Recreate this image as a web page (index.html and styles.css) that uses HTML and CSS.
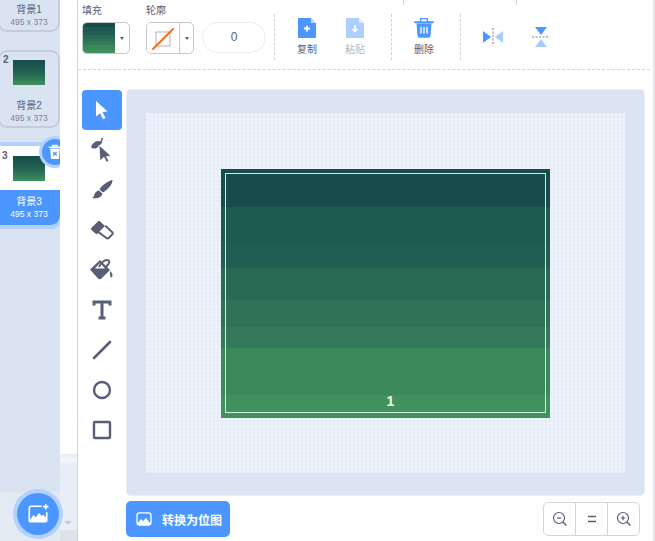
FILE: index.html
```html
<!DOCTYPE html>
<html>
<head>
    <title>背景3</title>
    <link rel="stylesheet" href="styles.css">
</head>
<body>
    <div class="app">
        <div class="sidebar">
            <div class="backdrops">
                <div class="card">
                    <div class="thumb"></div>
                    <div class="info">
                        <div class="name">背景1</div>
                        <div class="size">495 x 373</div>
                    </div>
                </div>
                <div class="card">
                    <span class="index">2</span>
                    <div class="thumb"></div>
                    <div class="info">
                        <div class="name">背景2</div>
                        <div class="size">495 x 373</div>
                    </div>
                </div>
                <div class="card selected">
                    <span class="index">3</span>
                    <div class="thumb"></div>
                    <div class="info">
                        <div class="name">背景3</div>
                        <div class="size">495 x 373</div>
                    </div>
                    <div class="remove">
                        <svg width="14" height="16" viewBox="0 0 16 18">
                            <path d="M1 3.500h14M5.500 3.200V1.500h5v1.700" fill="none" stroke="#fff" stroke-width="1.600"/>
                            <path d="M2.500 5h11l-1 12h-9z" fill="#fff"/>
                            <path d="M6 9l4 4M10 9l-4 4" stroke="#4c97ff" stroke-width="1.500"/>
                        </svg>
                    </div>
                </div>
            </div>
            <div class="strip">
                <span class="strip-arrow"></span>
            </div>
            <div class="add-backdrop">
                <svg width="22" height="22" viewBox="0 0 24 24">
                    <path d="M16 3.500H4.500a2 2 0 0 0-2 2v13a2 2 0 0 0 2 2h15a2 2 0 0 0 2-2V10" fill="none" stroke="#fff" stroke-width="1.800"/>
                    <path d="M3 19l4-6 2.500 2.500 3.500-4.500 3 3 2-1 3 3v3.500H3z" fill="#fff"/>
                    <path d="M20.500 1v6M17.500 4h6" stroke="#fff" stroke-width="1.800"/>
                </svg>
            </div>
        </div>

        <div class="main">
            <div class="toolbar">
                <span class="tick first"></span>
                <span class="tick second"></span>
                <div class="picker">
                    <div class="picker-label">填充</div>
                    <div class="picker-box">
                        <div class="swatch"></div>
                        <div class="caret"><span></span></div>
                    </div>
                </div>
                <div class="picker">
                    <div class="picker-label">轮廓</div>
                    <div class="picker-box">
                        <div class="swatch none">
                            <svg width="32" height="32" viewBox="0 0 32 32">
                                <rect x="9" y="9" width="14" height="14" fill="none" stroke="#b5b5b5"/>
                                <path d="M6 26L26 6" stroke="#ff6a1f" stroke-width="2" stroke-linecap="round"/>
                            </svg>
                        </div>
                        <div class="caret"><span></span></div>
                    </div>
                </div>
                <div class="stroke-width">0</div>

                <div class="group">
                    <div class="action">
                        <svg width="20" height="20" viewBox="0 0 20 20">
                            <path d="M1 0h13l5 5v15H1z" fill="#4c97ff"/>
                            <path d="M14 0v5h5z" fill="#c4dcff"/>
                            <path d="M10 7.500v6M7 10.500h6" stroke="#fff" stroke-width="1.800"/>
                        </svg>
                        <span>复制</span>
                    </div>
                    <div class="action off">
                        <svg width="20" height="20" viewBox="0 0 20 20">
                            <path d="M1 0h13l5 5v15H1z" fill="#4c97ff"/>
                            <path d="M14 0v5h5z" fill="#c4dcff"/>
                            <path d="M10 7v6M7.500 11l2.500 2.500 2.500-2.500" fill="none" stroke="#fff" stroke-width="1.600"/>
                        </svg>
                        <span>粘贴</span>
                    </div>
                </div>
                <div class="group">
                    <div class="action">
                        <svg width="20" height="20" viewBox="0 0 20 20">
                            <path d="M1 4.200h18" stroke="#4c97ff" stroke-width="2" stroke-linecap="round"/>
                            <path d="M6.500 4V1.500a1 1 0 0 1 1-1h5a1 1 0 0 1 1 1V4" fill="none" stroke="#4c97ff" stroke-width="1.500"/>
                            <path d="M2.500 5.500h15l-1 12.500a2 2 0 0 1-2 1.800h-9a2 2 0 0 1-2-1.800z" fill="#4c97ff"/>
                            <path d="M7 9v6.500M10 9v6.500M13 9v6.500" stroke="#fff" stroke-width="1.400"/>
                        </svg>
                        <span>删除</span>
                    </div>
                </div>
                <div class="flips">
                    <svg width="20" height="20" viewBox="0 0 20 20">
                        <path d="M0 4l8 6-8 6z" fill="#4c97ff"/>
                        <path d="M20 4l-8 6 8 6z" fill="#a9ccff"/>
                        <path d="M10 1v18" stroke="#a8a8ae" stroke-width="1.500" stroke-dasharray="2 1.500"/>
                    </svg>
                    <svg width="20" height="20" viewBox="0 0 20 20">
                        <path d="M4 0l6 8 6-8z" fill="#4c97ff"/>
                        <path d="M4 20l6-8 6 8z" fill="#a9ccff"/>
                        <path d="M1 10h18" stroke="#a8a8ae" stroke-width="1.500" stroke-dasharray="2 1.500"/>
                    </svg>
                </div>
            </div>

            <div class="workspace">
                <div class="tools">
                    <div class="tool active">
                        <svg width="20" height="20" viewBox="0 0 20 20">
                            <path d="M4 1l11.500 10.500-5 .5 3 6-2.500 1.200-3-6L4 16.500z" fill="#fff"/>
                        </svg>
                    </div>
                    <div class="tool">
                        <svg width="24" height="26" viewBox="0 0 24 26">
                            <path d="M1 10c1-3 4-6 7-6s4 1 4 2l-4 4-2 1.500c-2 .3-4 0-5-1.500z" fill="#575e75"/>
                            <path d="M10.500 6l2-5" stroke="#575e75" stroke-width="1.400"/>
                            <path d="M9 8l12 11-4.500.5 2.500 4.500-2.500 1.200-2.500-5L10 24z" fill="#575e75" stroke="#fff" stroke-width=".8"/>
                        </svg>
                    </div>
                    <div class="tool">
                        <svg width="24" height="24" viewBox="0 0 24 24">
                            <path d="M22.500 2c-3 .5-10 4-13 9.500l3.500 3C18 11 22.500 7 22.500 2z" fill="#575e75"/>
                            <path d="M9 12.500l3.300 2.900c-.3 3.500-4.500 5.800-10.500 4.600 2.500-1 2-2.800 3.200-4.800.8-1.300 2.400-2.400 4-2.700z" fill="#575e75"/>
                        </svg>
                    </div>
                    <div class="tool">
                        <svg width="24" height="24" viewBox="0 0 24 24">
                            <path d="M9 2.500L1.500 9.800a1.500 1.500 0 0 0 0 2.200l5 4.500 8.500-8.500z" fill="#575e75"/>
                            <path d="M15.300 7.800l7 6.400a1.500 1.500 0 0 1 0 2.200l-3.400 3.400a2 2 0 0 1-2.800 0l-8.700-6.400" fill="none" stroke="#575e75" stroke-width="2"/>
                        </svg>
                    </div>
                    <div class="tool">
                        <svg width="26" height="24" viewBox="0 0 26 24">
                            <path d="M11 2L1 11.500l8 9c1 1 2.500 1 3.500 0L21 12z" fill="#575e75"/>
                            <path d="M11 5l5 5.500H6z" fill="#fff"/>
                            <path d="M10 9c2-4 5-7 8-7 2.500 0 3 2 1.500 4L17 9" fill="none" stroke="#575e75" stroke-width="2"/>
                            <path d="M21 13c1.500 1 2.500 3 2.500 4.500S22 20 21.500 19 21 15 21 13z" fill="#575e75"/>
                        </svg>
                    </div>
                    <div class="tool">
                        <svg width="20" height="20" viewBox="0 0 20 20">
                            <path d="M2 5.500V2h16v3.500M10 2v16M6.500 18h7" fill="none" stroke="#575e75" stroke-width="3"/>
                        </svg>
                    </div>
                    <div class="tool">
                        <svg width="22" height="22" viewBox="0 0 22 22">
                            <path d="M3 19L19 3" stroke="#575e75" stroke-width="2.600" stroke-linecap="round"/>
                        </svg>
                    </div>
                    <div class="tool">
                        <svg width="20" height="20" viewBox="0 0 20 20">
                            <circle cx="10" cy="10" r="8" fill="none" stroke="#575e75" stroke-width="2.400"/>
                        </svg>
                    </div>
                    <div class="tool">
                        <svg width="20" height="20" viewBox="0 0 20 20">
                            <rect x="2" y="2" width="16" height="16" rx="1" fill="none" stroke="#575e75" stroke-width="2.400"/>
                        </svg>
                    </div>
                </div>

                <div class="canvas-panel">
                    <div class="canvas-inner">
                        <div class="artwork">
                            <div class="frame">
                                <span class="frame-number">1</span>
                            </div>
                        </div>
                    </div>
                </div>
            </div>

            <div class="footer">
                <div class="convert">
                    <svg width="16" height="14" viewBox="0 0 18 16">
                        <rect x="1" y="1" width="16" height="14" rx="3" fill="none" stroke="#fff" stroke-width="1.500"/>
                        <path d="M1.500 13l4-5 2.500 2.500 3-4 5 6v1.500a1 1 0 0 1-1 1H3z" fill="#fff"/>
                    </svg>
                    <span>转换为位图</span>
                </div>
                <div class="zoom-group">
                    <div class="zoom-btn">
                        <svg width="16" height="16" viewBox="0 0 16 16">
                            <circle cx="7" cy="7" r="5.500" fill="none" stroke="#575e75" stroke-width="1.200"/>
                            <path d="M11 11l3.500 3.500" stroke="#575e75" stroke-width="1.400"/>
                            <path d="M4.800 7h4.400" stroke="#575e75" stroke-width="1.200"/>
                        </svg>
                    </div>
                    <div class="zoom-btn">
                        <svg width="16" height="16" viewBox="0 0 16 16">
                            <path d="M4 5.500h8M4 10.500h8" stroke="#575e75" stroke-width="1.400"/>
                        </svg>
                    </div>
                    <div class="zoom-btn">
                        <svg width="16" height="16" viewBox="0 0 16 16">
                            <circle cx="7" cy="7" r="5.500" fill="none" stroke="#575e75" stroke-width="1.200"/>
                            <path d="M11 11l3.500 3.500" stroke="#575e75" stroke-width="1.400"/>
                            <path d="M4.800 7h4.400M7 4.800v4.400" stroke="#575e75" stroke-width="1.200"/>
                        </svg>
                    </div>
                </div>
            </div>
        </div>
    </div>
</body>
</html>
```

FILE: styles.css
```css
html, body {
    height: 100%;
    margin: 0;
    overflow: hidden;
}

body {
    background: #fff;
    color: #575e75;
    font-family: "Liberation Sans", "Noto Sans CJK SC", sans-serif;
}

.app {
    display: flex;
    height: 541px;
    width: 655px;
}

/* left column with the backdrop list */
.sidebar {
    background: #fff;
    border-right: 1px solid #d3d3d6;
    display: flex;
    flex: none;
    height: 541px;
    overflow: hidden;
    position: relative;
    width: 77px;
}

.backdrops {
    background: linear-gradient(#d9e3f2 492px, #e2eaf4 492px);
    display: flex;
    flex: none;
    flex-direction: column;
    gap: 18px;
    height: 541px;
    overflow: hidden;
    position: relative;
    width: 60px;
}

.card {
    align-items: center;
    background: #d9e3f2;
    border: 2px solid #c6cdd9;
    border-radius: 9px;
    box-sizing: border-box;
    display: flex;
    flex: none;
    flex-direction: column;
    height: 78px;
    margin-left: -2px;
    padding-top: 8px;
    position: relative;
    width: 62px;
}

.card:first-child {
    margin-top: -46px;
}

.index {
    color: #575e75;
    font-size: 10px;
    font-weight: bold;
    left: 3px;
    line-height: 12px;
    position: absolute;
    top: 2px;
}

.thumb {
    background: linear-gradient(#164c4b, #1f5d50 40%, #2e7257 70%, #3f925d);
    flex: none;
    height: 25px;
    width: 32px;
}

.info {
    margin-top: 14px;
    text-align: center;
}

.name {
    font-size: 10px;
    line-height: 13px;
}

.size {
    color: #7d8394;
    font-size: 8.500px;
    line-height: 13px;
}

.card.selected {
    background: #fff;
    border: 0;
    border-radius: 0 0 9px 0;
    box-shadow: 0 0 0 4px #b4d1fb;
    height: 79px;
    margin-left: 0;
    padding-top: 10px;
    width: 60px;
}

.selected .index {
    left: 2px;
    top: 4px;
}

.selected .thumb {
    margin-right: 2px;
}

.selected .info {
    background: #4c97ff;
    border-radius: 0 0 9px 0;
    box-sizing: border-box;
    color: #fff;
    flex: 1;
    margin-top: 9px;
    padding: 5px 2px 0 0;
    width: 100%;
}

.selected .size {
    color: #fff;
}

.remove {
    align-items: center;
    background: #4c97ff;
    border-radius: 50%;
    box-shadow: 0 0 0 3px #b4d1fb;
    display: flex;
    height: 26px;
    justify-content: center;
    position: absolute;
    right: -8px;
    top: -7px;
    width: 26px;
}

.strip {
    background: linear-gradient(#fff 454px, #e6edf6 454px, #f4f7fb 460px, #e6edf6 466px, #e8eff7 530px, #dfe3e8 530px);
    flex: 1;
    position: relative;
}

.strip-arrow {
    border-left: 4px solid transparent;
    border-right: 4px solid transparent;
    border-top: 4px solid #c8ccd4;
    left: 4px;
    position: absolute;
    top: 521px;
}

.add-backdrop {
    align-items: center;
    background: #4c97ff;
    border-radius: 50%;
    box-shadow: 0 0 0 4px #b4d1fb;
    display: flex;
    height: 42px;
    justify-content: center;
    left: 17px;
    position: absolute;
    top: 493px;
    width: 42px;
}

/* editor */
.main {
    border-right: 2px solid #e4e6eb;
    display: flex;
    flex: 1;
    flex-direction: column;
    min-width: 0;
}

.toolbar {
    align-items: flex-start;
    border-bottom: 1px dashed #d4d4d8;
    box-sizing: border-box;
    display: flex;
    flex: none;
    height: 70px;
    margin-right: 3px;
    padding: 4px 0 0 4px;
    position: relative;
}

.tick {
    background: #d4d4d8;
    height: 5px;
    position: absolute;
    top: 0;
    width: 1px;
}

.tick.first {
    left: 325px;
}

.tick.second {
    left: 438px;
}

.picker {
    margin-right: 16px;
}

.picker-label {
    font-size: 10px;
    line-height: 14px;
    margin-bottom: 4px;
}

.picker-box {
    border: 1px solid #c8c8c8;
    border-radius: 5px;
    box-sizing: border-box;
    display: flex;
    height: 32px;
    overflow: hidden;
    width: 48px;
}

.swatch {
    background: linear-gradient(
        #164c4b 15%, #1d5a51 15%, #1d5a51 30%,
        #215f52 30%, #215f52 40%, #296a55 40%, #296a55 53%,
        #2e7257 53%, #2e7257 63%, #34795a 63%, #34795a 72%,
        #3b885b 72%, #3b885b 91%, #3f925d 91%);
    flex: none;
    width: 32px;
}

.swatch.none {
    background: #fff;
    border-right: 1px solid #c8c8c8;
}

.caret {
    align-items: center;
    display: flex;
    flex: 1;
    justify-content: center;
}

.caret span {
    border-left: 2.500px solid transparent;
    border-right: 2.500px solid transparent;
    border-top: 3px solid #575e75;
}

.stroke-width {
    border: 1px solid #e7ebf3;
    border-radius: 16px;
    box-sizing: border-box;
    color: #575e75;
    font-size: 12px;
    height: 31px;
    line-height: 29px;
    margin: 18px 8px 0 -8px;
    text-align: center;
    width: 64px;
}

.group {
    border-left: 1px dashed #d4d4d8;
    display: flex;
    height: 46px;
    margin-top: 10px;
    padding: 0 12px 0 8px;
}

.action {
    align-items: center;
    display: flex;
    flex-direction: column;
    font-size: 10px;
    line-height: 14px;
    padding-top: 4px;
    width: 48px;
}

.action svg {
    margin-bottom: 5px;
}

.action.off {
    opacity: .45;
}

.flips {
    border-left: 1px dashed #d4d4d8;
    box-sizing: border-box;
    display: flex;
    gap: 28px;
    height: 46px;
    margin-top: 10px;
    padding: 13px 0 0 22px;
}

.workspace {
    display: flex;
    flex: none;
    gap: 5px;
    height: 405px;
    margin-top: 20px;
    padding-left: 4px;
}

.tools {
    display: flex;
    flex: none;
    flex-direction: column;
    width: 40px;
}

.tool {
    align-items: center;
    border-radius: 4px;
    display: flex;
    flex: none;
    height: 40px;
    justify-content: center;
}

.tool.active {
    background: #4c97ff;
}

.canvas-panel {
    background: #dbe4f2;
    border-radius: 4px;
    box-shadow: 0 0 0 1px #e9eef7;
    box-sizing: border-box;
    flex: none;
    padding: 23px 19px 22px;
    width: 517px;
}

.canvas-inner {
    align-items: center;
    background-color: #e8eef7;
    background-image: radial-gradient(#eff3fa 1px, transparent 1px);
    background-size: 4px 4px;
    display: flex;
    height: 100%;
    justify-content: center;
}

.artwork {
    background: linear-gradient(
        #164c4b 38px, #1d5a51 38px, #1d5a51 74px,
        #215f52 74px, #215f52 99px, #296a55 99px, #296a55 131px,
        #2e7257 131px, #2e7257 158px, #34795a 158px, #34795a 179px,
        #3b885b 179px, #3b885b 226px, #3f925d 226px);
    box-sizing: border-box;
    height: 249px;
    padding: 4px 4px 5px;
    width: 329px;
}

.frame {
    align-items: center;
    border: 1px solid #d8e6e4;
    box-sizing: border-box;
    display: flex;
    flex-direction: column;
    height: 100%;
    justify-content: flex-end;
    padding-bottom: 3px;
}

.frame-number {
    color: #f2f6f4;
    font-size: 14px;
    font-weight: bold;
    line-height: 16px;
    margin-left: 10px;
}

.footer {
    align-items: flex-start;
    display: flex;
    justify-content: space-between;
    padding: 6px 13px 0 48px;
}

.convert {
    align-items: center;
    background: #4c97ff;
    border-radius: 5px;
    color: #fff;
    display: flex;
    font-size: 12px;
    font-weight: bold;
    gap: 10px;
    height: 36px;
    padding-left: 10px;
    width: 94px;
}

.zoom-group {
    border: 1px solid #d6d6da;
    border-radius: 5px;
    box-sizing: border-box;
    display: flex;
    height: 34px;
    margin-top: 1px;
    width: 97px;
}

.zoom-btn {
    align-items: center;
    display: flex;
    flex: 1;
    justify-content: center;
}

.zoom-btn + .zoom-btn {
    border-left: 1px solid #d6d6da;
}
```
